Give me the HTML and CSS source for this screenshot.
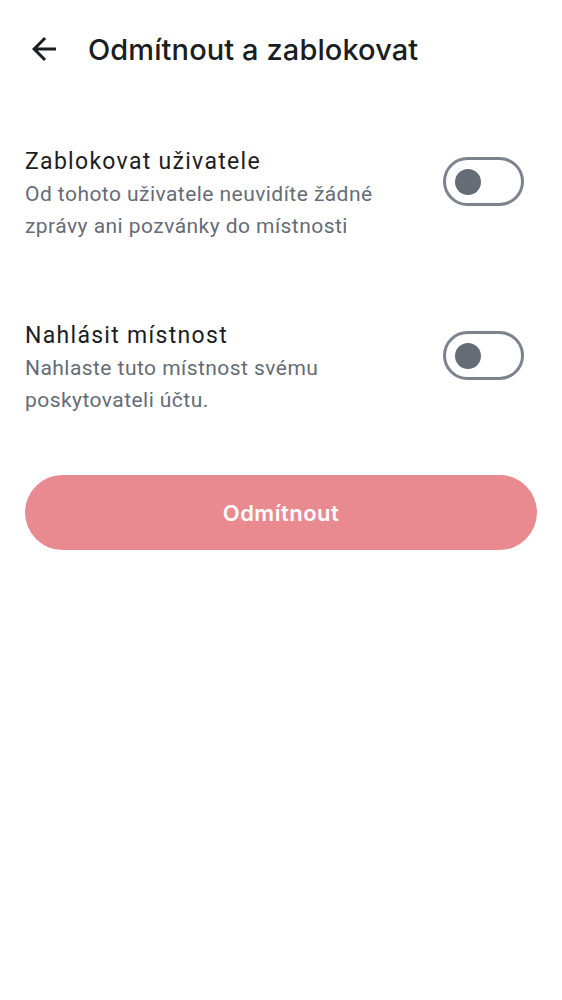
FILE: index.html
```html
<!DOCTYPE html>
<html lang="cs">
<head>
<meta charset="utf-8">
<link rel="stylesheet" href="styles.css">
</head>
<body>
<header class="topbar">
  <button class="back" aria-label="Zpět">
    <svg width="36" height="36" viewBox="0 0 24 24"><path d="M20 11H7.83l5.59-5.59L12 4l-8 8 8 8 1.41-1.41L7.83 13H20v-2z" fill="#1b1d22"/></svg>
  </button>
  <h1 class="title">Odmítnout a zablokovat</h1>
</header>
<main class="content">
  <div class="row">
    <div class="texts">
      <div class="row-title">Zablokovat uživatele</div>
      <div class="row-desc">Od tohoto uživatele neuvidíte žádné zprávy ani pozvánky do místnosti</div>
    </div>
    <div class="switch"><span class="thumb"></span></div>
  </div>
  <div class="row">
    <div class="texts">
      <div class="row-title">Nahlásit místnost</div>
      <div class="row-desc">Nahlaste tuto místnost svému poskytovateli účtu.</div>
    </div>
    <div class="switch"><span class="thumb"></span></div>
  </div>
  <button class="primary">Odmítnout</button>
</main>
</body>
</html>
```
FILE: styles.css
```css
* { box-sizing: border-box; }
html, body { margin: 0; background: #ffffff; }
body { font-family: Roboto, "Noto Sans", sans-serif; color: #1b1d22; }
.topbar {
  display: flex;
  align-items: center;
  height: 98px;
  padding: 0 0 0 26px;
}
.back {
  border: 0; background: none; padding: 0; margin: 0;
  width: 36px; height: 36px;
  display: flex; align-items: center; justify-content: center;
}
.title {
  margin: 0 0 0 26px;
  font-family: Inter, sans-serif;
  font-weight: 500;
  font-size: 29px;
  letter-spacing: 0.1px;
  color: #1b1d22;
}
.content {
  display: flex;
  flex-direction: column;
  gap: 78px;
  padding: 48px 25px 0;
}
.row {
  display: flex;
  align-items: flex-start;
  justify-content: space-between;
  padding-right: 13px;
}
.texts { width: 385px; }
.row-title { font-size: 23px; line-height: 32px; letter-spacing: 1.3px; color: #1b1d22; }
.row-desc { font-size: 21px; line-height: 32px; color: #656c76; letter-spacing: 0.45px; }
.switch {
  margin-top: 11px;
  width: 81px; height: 49px;
  border: 3px solid #7c838d;
  border-radius: 25px;
  display: flex; align-items: center;
  padding-left: 9px;
}
.thumb { width: 26px; height: 26px; border-radius: 50%; background: #656c76; }
.primary {
  display: block; width: 100%;
  height: 75px;
  margin-top: -19px;
  border: 0; border-radius: 38px;
  background: #e98a91;
  color: #ffffff;
  font-family: Inter, sans-serif;
  font-weight: 600;
  font-size: 22px;
  letter-spacing: 0.5px;
}
```
